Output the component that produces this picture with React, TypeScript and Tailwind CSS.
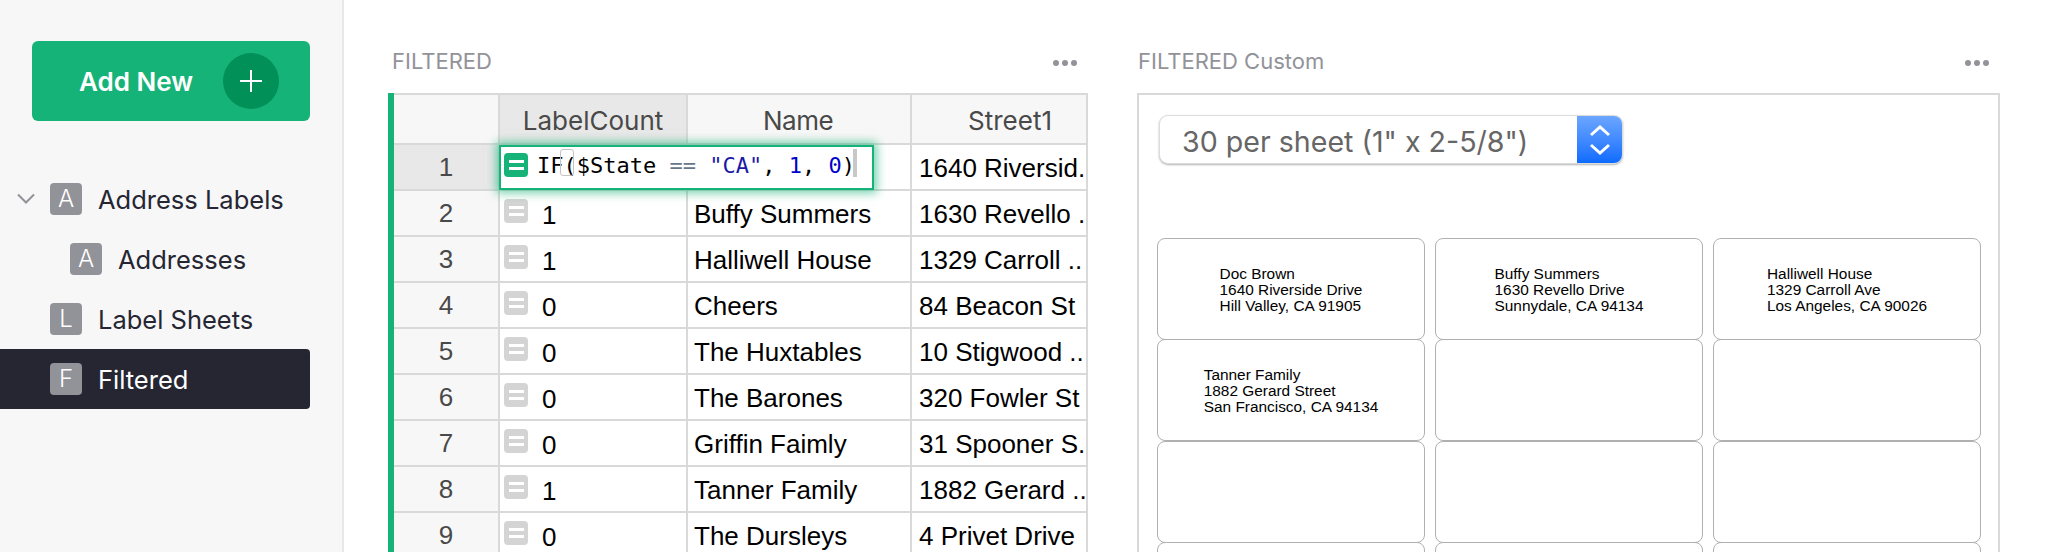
import React from 'react';

const rows = [
    { id: 2, count: '1', name: 'Buffy Summers', street: '1630 Revello .' },
    { id: 3, count: '1', name: 'Halliwell House', street: '1329 Carroll ..' },
    { id: 4, count: '0', name: 'Cheers', street: '84 Beacon St' },
    { id: 5, count: '0', name: 'The Huxtables', street: '10 Stigwood ..' },
    { id: 6, count: '0', name: 'The Barones', street: '320 Fowler St' },
    { id: 7, count: '0', name: 'Griffin Faimly', street: '31 Spooner S.' },
    { id: 8, count: '1', name: 'Tanner Family', street: '1882 Gerard ..' },
    { id: 9, count: '0', name: 'The Dursleys', street: '4 Privet Drive' },
];

const labels: string[][] = [
    ['Doc Brown', '1640 Riverside Drive', 'Hill Valley, CA 91905'],
    ['Buffy Summers', '1630 Revello Drive', 'Sunnydale, CA 94134'],
    ['Halliwell House', '1329 Carroll Ave', 'Los Angeles, CA 90026'],
    ['Tanner Family', '1882 Gerard Street', 'San Francisco, CA 94134'],
    [],
    [],
    [],
    [],
    [],
    [],
    [],
    [],
];

const PageIcon: React.FC<{ letter: string }> = ({ letter }) => (
    <div className="w-8 h-8 rounded-[4px] bg-[#929299] text-white flex items-center justify-center text-[24px] leading-none shrink-0 font-light">
        {letter}
    </div>
);

const FormulaIcon: React.FC<{ active?: boolean }> = ({ active }) => (
    <div
        className={`w-6 h-6 rounded-[4px] flex flex-col items-center justify-center gap-[4px] shrink-0 ${
            active ? 'bg-[#16b378]' : 'bg-[#d4d4d4]'
        }`}
    >
        <div className="w-[15px] h-[3px] bg-white" />
        <div className="w-[15px] h-[3px] bg-white" />
    </div>
);

const Dots: React.FC = () => (
    <div className="flex gap-[3px]">
        <div className="w-[6px] h-[6px] rounded-full bg-[#929299]" />
        <div className="w-[6px] h-[6px] rounded-full bg-[#929299]" />
        <div className="w-[6px] h-[6px] rounded-full bg-[#929299]" />
    </div>
);

const SectionHeader: React.FC<{ title: string; pad: string }> = ({ title, pad }) => (
    <div className={`h-[93px] flex items-start justify-between pt-[49px] ${pad}`}>
        <span className="text-[22px] leading-6 text-[#929299]">{title}</span>
        <div className="pt-[11px] pr-[11px]">
            <Dots />
        </div>
    </div>
);

const Sidebar: React.FC = () => (
    <aside className="w-[344px] h-full shrink-0 bg-[#f7f7f7] border-r-2 border-[#e8e8e8] pt-[41px] font-['Inter',sans-serif]">
        <div className="ml-8 w-[278px] h-20 rounded-[6px] bg-[#16b378] flex items-center pl-[47px]">
            <span className="text-[26px] font-semibold text-white w-[144px] whitespace-nowrap">Add New</span>
            <div className="w-14 h-14 rounded-full bg-[#009058] flex items-center justify-center">
                <svg width="24" height="24" viewBox="0 0 24 24" fill="none" stroke="white" strokeWidth="2">
                    <path d="M12 1v22M1 12h22" />
                </svg>
            </div>
        </div>
        <nav className="mt-12 text-[25.5px] text-[#262633]">
            <div className="h-[60px] flex items-center w-[310px] pl-[17px]">
                <svg width="18" height="12" viewBox="0 0 18 12" fill="none" stroke="#929299" strokeWidth="2" className="mr-[15px]">
                    <path d="M1 1.5l8 8 8-8" />
                </svg>
                <PageIcon letter="A" />
                <span className="ml-4 pt-[3px]">Address Labels</span>
            </div>
            <div className="h-[60px] flex items-center w-[310px] pl-[70px]">
                <PageIcon letter="A" />
                <span className="ml-4 pt-[3px]">Addresses</span>
            </div>
            <div className="h-[60px] flex items-center w-[310px] pl-[50px]">
                <PageIcon letter="L" />
                <span className="ml-4 pt-[3px]">Label Sheets</span>
            </div>
            <div className="h-[60px] flex items-center w-[310px] pl-[50px] bg-[#262633] text-white rounded-r-[4px]">
                <PageIcon letter="F" />
                <span className="ml-4 pt-[3px]">Filtered</span>
            </div>
        </nav>
    </aside>
);

const GridPanel: React.FC = () => (
    <section className="w-[700px] shrink-0">
        <SectionHeader title="FILTERED" pad="pl-[4px]" />
        <div className="border-l-[6px] border-[#16b378] font-['Liberation_Sans',sans-serif] text-[26px] text-black">
            <div className="flex h-[52px] border-t-2 border-b-2 border-[#d9d9d9] text-[#494949] font-['Inter',sans-serif] text-[26px] bg-[#f7f7f7]">
                <div className="w-[106px] border-r-2 border-[#d9d9d9]" />
                <div className="w-[188px] border-r-2 border-[#d9d9d9] bg-[#e8e8e8] flex items-center justify-center pt-[3px]">LabelCount</div>
                <div className="w-[224px] border-r-2 border-[#d9d9d9] flex items-center justify-center pt-[3px] pr-[2px] tracking-[-0.5px]">Name</div>
                <div className="w-[176px] border-r-2 border-[#d9d9d9] flex items-center justify-center pt-[3px] pl-[22px]">Street1</div>
            </div>
            <div className="relative flex h-[46px] border-b-2 border-[#d9d9d9]">
                <div className="w-[106px] border-r-2 border-[#d9d9d9] bg-[#e8e8e8] text-[#494949] flex items-center justify-center">1</div>
                <div className="w-[188px] border-r-2 border-[#d9d9d9]" />
                <div className="w-[224px] border-r-2 border-[#d9d9d9]" />
                <div className="w-[176px] border-r-2 border-[#d9d9d9] pl-[7px] pt-[2px] flex items-center whitespace-nowrap overflow-hidden">1640 Riversid.</div>
                <div className="absolute left-[105px] top-0 w-[375px] h-[45px] bg-white border-2 border-[#16b378] shadow-[0_0_9px_3px_rgba(22,179,120,0.6)] flex items-start pl-[3px] pt-[6px]">
                    <FormulaIcon active />
                    <span className="ml-[9px] -mt-[1px] font-['DejaVu_Sans_Mono',monospace] text-[22px] leading-[28px] whitespace-pre text-black">
                        IF($State <span className="text-[#687687]">==</span> <span className="text-[#1a1aa6]">"CA"</span>, <span className="text-[#0000cd]">1</span>, <span className="text-[#0000cd]">0</span>)
                    </span>
                    <div className="absolute left-[59px] top-[2px] w-[14px] h-[27px] border border-[#c4c4c4] rounded-[3px]" />
                    <div className="absolute left-[352px] top-[2px] w-[4px] h-[28px] bg-[#c8c8c8]" />
                </div>
            </div>
            {rows.map((row) => (
                <div key={row.id} className="flex h-[46px] border-b-2 border-[#d9d9d9]">
                    <div className="w-[106px] border-r-2 border-[#d9d9d9] bg-[#f7f7f7] text-[#494949] flex items-center justify-center">{row.id}</div>
                    <div className="w-[188px] border-r-2 border-[#d9d9d9] flex items-start pl-[4px] pt-[8px]">
                        <FormulaIcon />
                        <span className="ml-[14px] leading-[33px]">{row.count}</span>
                    </div>
                    <div className="w-[224px] border-r-2 border-[#d9d9d9] pl-[6px] pt-[2px] flex items-center whitespace-nowrap">{row.name}</div>
                    <div className="w-[176px] border-r-2 border-[#d9d9d9] pl-[7px] pt-[2px] flex items-center whitespace-nowrap overflow-hidden">{row.street}</div>
                </div>
            ))}
        </div>
    </section>
);

const SheetSelect: React.FC = () => (
    <div className="ml-[20px] w-[464px] h-[49px] rounded-[9px] bg-white border border-[#dcdcdc] shadow-[0_1px_2px_rgba(0,0,0,0.3)] flex overflow-hidden">
        <div className="flex-1 pl-[22px] pt-[6px] flex items-center text-[28.6px] text-[#666666] font-['Inter',sans-serif] whitespace-nowrap">
            30 per sheet (1" x 2-5/8")
        </div>
        <div className="w-[45px] bg-gradient-to-b from-[#6ba6ff] to-[#0a6bff] flex items-center justify-center">
            <svg width="22" height="32" viewBox="0 0 22 32" fill="none" stroke="white" strokeWidth="3">
                <path d="M2 11l9-8 9 8M2 21l9 8 9-8" />
            </svg>
        </div>
    </div>
);

const LabelsPanel: React.FC = () => (
    <section className="w-[863px] shrink-0">
        <SectionHeader title="FILTERED Custom" pad="pl-[1px]" />
        <div className="h-[600px] border-2 border-[#d9d9d9] pt-[20px]">
            <SheetSelect />
            <div className="ml-[18px] mt-[74px] grid grid-cols-[268px_268px_268px] gap-x-[10px] auto-rows-[101.33px]">
                {labels.map((lines, i) => (
                    <div key={i} className="h-[102px] rounded-[8px] border border-[#b0b0b0] flex justify-center pt-[27px]">
                        <div className="font-['Liberation_Sans',sans-serif] text-[15.4px] leading-4 text-black whitespace-nowrap">
                            {lines.map((line) => (
                                <div key={line}>{line}</div>
                            ))}
                        </div>
                    </div>
                ))}
            </div>
        </div>
    </section>
);

const App: React.FC = () => {
    return (
        <div className="w-[2048px] h-[552px] overflow-hidden flex bg-white font-['Inter',sans-serif]">
            <Sidebar />
            <main className="flex pl-[44px] gap-[49px]">
                <GridPanel />
                <LabelsPanel />
            </main>
        </div>
    );
};

export default App;
